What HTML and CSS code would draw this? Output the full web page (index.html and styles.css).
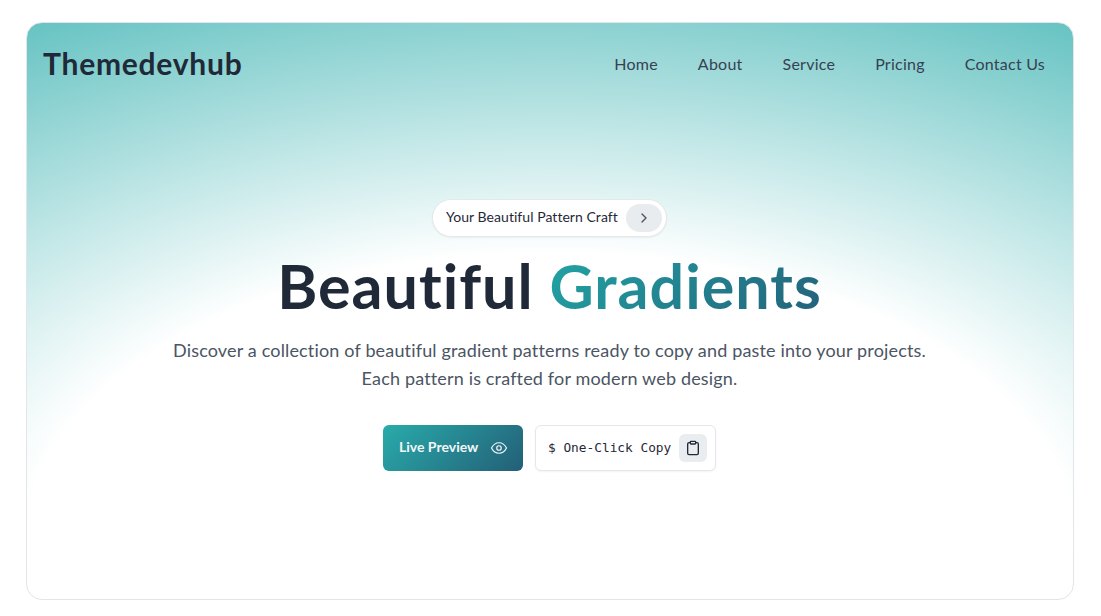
FILE: index.html
```html
<!DOCTYPE html>
<html lang="en">
<head>
    <meta charset="UTF-8">
    <meta name="viewport" content="width=device-width, initial-scale=1.0">
    <title>Themedevhub</title>
    <link rel="stylesheet" href="styles.css">
</head>
<body>
    <div class="card">
        <nav class="navbar">
            <a class="logo" href="#">Themedevhub</a>
            <ul class="nav-links">
                <li><a href="#">Home</a></li>
                <li><a href="#">About</a></li>
                <li><a href="#">Service</a></li>
                <li><a href="#">Pricing</a></li>
                <li><a href="#">Contact Us</a></li>
            </ul>
        </nav>

        <section class="hero">
            <a class="pill" href="#">
                <span class="pill-text">Your Beautiful Pattern Craft</span>
                <span class="pill-arrow">
                    <svg width="16" height="16" viewBox="0 0 24 24" fill="none" stroke="currentColor" stroke-width="2" stroke-linecap="round" stroke-linejoin="round"><path d="m9 18 6-6-6-6"/></svg>
                </span>
            </a>
            <h1>Beautiful <span class="gradient-text">Gradients</span></h1>
            <p class="lead">Discover a collection of beautiful gradient patterns ready to copy and paste into your projects.<br>Each pattern is crafted for modern web design.</p>
            <div class="actions">
                <a class="btn-primary" href="#">
                    <span class="btn-label">Live Preview</span>
                    <svg width="18" height="18" viewBox="0 0 24 24" fill="none" stroke="currentColor" stroke-width="1.6" stroke-linecap="round" stroke-linejoin="round"><path d="M2 12s3.6-7 10-7 10 7 10 7-3.6 7-10 7-10-7-10-7Z"/><circle cx="12" cy="12" r="3"/></svg>
                </a>
                <div class="btn-copy">
                    <code>$ One-Click Copy</code>
                    <span class="copy-icon">
                        <svg width="16" height="16" viewBox="0 0 24 24" fill="none" stroke="currentColor" stroke-width="2" stroke-linecap="round" stroke-linejoin="round"><rect x="8" y="2" width="8" height="4" rx="1"/><path d="M16 4h2a2 2 0 0 1 2 2v14a2 2 0 0 1-2 2H6a2 2 0 0 1-2-2V6a2 2 0 0 1 2-2h2"/></svg>
                    </span>
                </div>
            </div>
        </section>
    </div>
</body>
</html>
```

FILE: styles.css
```css
* {
    box-sizing: border-box;
}
body {
    margin: 0;
    padding: 22px 27px 16px 26px;
    background: #fff;
    font-family: "Lato", "Open Sans", sans-serif;
    font-variant-ligatures: none;
    color: #1f2937;
}
a {
    color: inherit;
    text-decoration: none;
}
.card {
    height: 578px;
    border: 1px solid #e2e5e9;
    border-radius: 16px;
    overflow: hidden;
    background: radial-gradient(125% 125% at 50% 90%, #fff 40%, #26aaa9 100%);
}
.navbar {
    display: flex;
    justify-content: space-between;
    align-items: center;
    padding: 0 28px 0 16px;
    height: 80px;
}
.logo {
    font-size: 30px;
    font-weight: 700;
    letter-spacing: 0.75px;
    color: #1f2937;
}
.nav-links {
    display: flex;
    gap: 40px;
    margin: 0;
    padding: 0;
    list-style: none;
}
.nav-links a {
    font-size: 16px;
    letter-spacing: 0.24px;
    color: #374151;
}
.hero {
    display: flex;
    flex-direction: column;
    align-items: center;
    padding: 96px 1px 0 0;
    text-align: center;
}
.pill {
    display: flex;
    align-items: center;
    justify-content: space-between;
    width: 235px;
    height: 38px;
    padding: 0 4px 0 13px;
    background: #fff;
    border: 1px solid #e5e7eb;
    border-radius: 19px;
    font-size: 14px;
    letter-spacing: 0.05px;
    color: #1f2937;
    box-shadow: 0 1px 2px rgba(0, 0, 0, 0.05);
}
.pill-text {
    padding-bottom: 4px;
}
.pill-arrow {
    display: flex;
    align-items: center;
    justify-content: center;
    width: 36px;
    height: 28px;
    border-radius: 14px;
    background: #e9ecef;
    color: #4b5563;
}
h1 {
    margin: 11px 0 0;
    font-size: 61px;
    line-height: 76px;
    font-weight: 700;
    letter-spacing: 1px;
    color: #1f2937;
}
.gradient-text {
    background: linear-gradient(135deg, #22a5a5, #23607a);
    -webkit-background-clip: text;
    background-clip: text;
    color: transparent;
}
.lead {
    margin: 12px 0 0;
    font-size: 18px;
    line-height: 28px;
    letter-spacing: 0.16px;
    color: #4b5563;
}
.actions {
    display: flex;
    gap: 12px;
    margin-top: 33px;
}
.btn-primary {
    display: flex;
    align-items: center;
    justify-content: space-between;
    width: 140px;
    height: 46px;
    padding: 0 15px 0 16px;
    border-radius: 6px;
    background: linear-gradient(135deg, #29abaa, #235f78);
    color: #f3f6f7;
    font-size: 14px;
    font-weight: 700;
    white-space: nowrap;
}
.btn-label {
    padding-bottom: 4px;
}
.btn-copy {
    display: flex;
    align-items: center;
    justify-content: space-between;
    width: 181px;
    height: 46px;
    padding: 0 8px 0 12px;
    background: #fff;
    border: 1px solid #e5e7eb;
    border-radius: 6px;
    box-shadow: 0 1px 2px rgba(0, 0, 0, 0.05);
}
.btn-copy code {
    padding-bottom: 2px;
    font-family: "DejaVu Sans Mono", "Liberation Mono", monospace;
    font-size: 12.8px;
    color: #1f2937;
}
.copy-icon {
    display: flex;
    align-items: center;
    justify-content: center;
    width: 28px;
    height: 28px;
    border-radius: 6px;
    background: #e9edf0;
    color: #1f2937;
}
```
